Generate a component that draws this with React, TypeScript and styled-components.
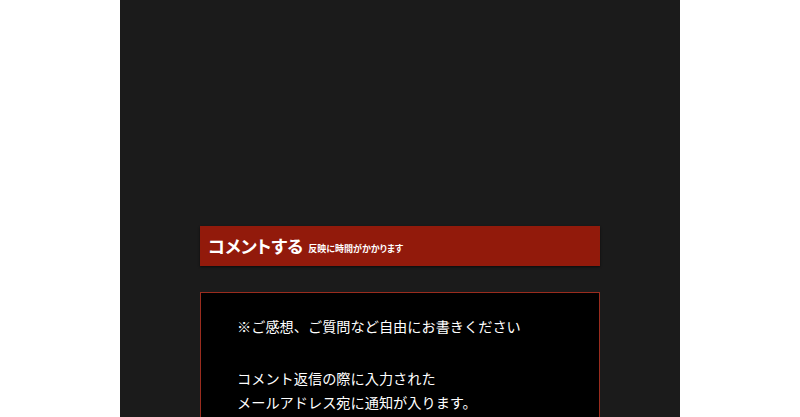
import React from "react";
import styled, { createGlobalStyle } from "styled-components";

const Global = createGlobalStyle`
  html, body { margin: 0; padding: 0; background: #ffffff; }
  body { font-family: "Noto Sans CJK JP", "Noto Sans", sans-serif; }
`;

const Page = styled.div`
  display: flex;
  justify-content: center;
  height: 100vh;
  overflow: hidden;
`;

const Panel = styled.main`
  width: 560px;
  background: #1b1b1b;
  padding: 226px 80px 0;
  box-sizing: border-box;
  display: flex;
  flex-direction: column;
  gap: 26px;
  & > * { flex-shrink: 0; }
`;

const Heading = styled.h2`
  margin: 0;
  height: 40px;
  box-sizing: border-box;
  padding: 0 8px;
  display: flex;
  align-items: center;
  gap: 5px;
  background: #921a0b;
  box-shadow: 0 1px 2px rgba(0, 0, 0, 0.6);
  color: #ffffff;
  font-feature-settings: "palt";
`;

const Title = styled.span`
  font-size: 17.5px;
  font-weight: 700;
  line-height: 1;
`;

const Note = styled.span`
  font-size: 9px;
  font-weight: 700;
  line-height: 1;
  margin-top: 5px;
`;

const Box = styled.section`
  background: #000000;
  border: 1px solid #9a2c1e;
  padding: 21px 36px 30px;
  color: #ffffff;
`;

const Para = styled.p<{ $gap?: number }>`
  margin: 0 0 ${(p) => p.$gap ?? 0}px;
  font-size: 14.2px;
  line-height: 24px;
`;

export default function App() {
  return (
    <>
      <Global />
      <Page>
        <Panel>
          <Heading>
            <Title>コメントする</Title>
            <Note>反映に時間がかかります</Note>
          </Heading>
          <Box>
            <Para $gap={28}>※ご感想、ご質問など自由にお書きください</Para>
            <Para>
              コメント返信の際に入力された
              <br />
              メールアドレス宛に通知が入ります。
            </Para>
          </Box>
        </Panel>
      </Page>
    </>
  );
}
